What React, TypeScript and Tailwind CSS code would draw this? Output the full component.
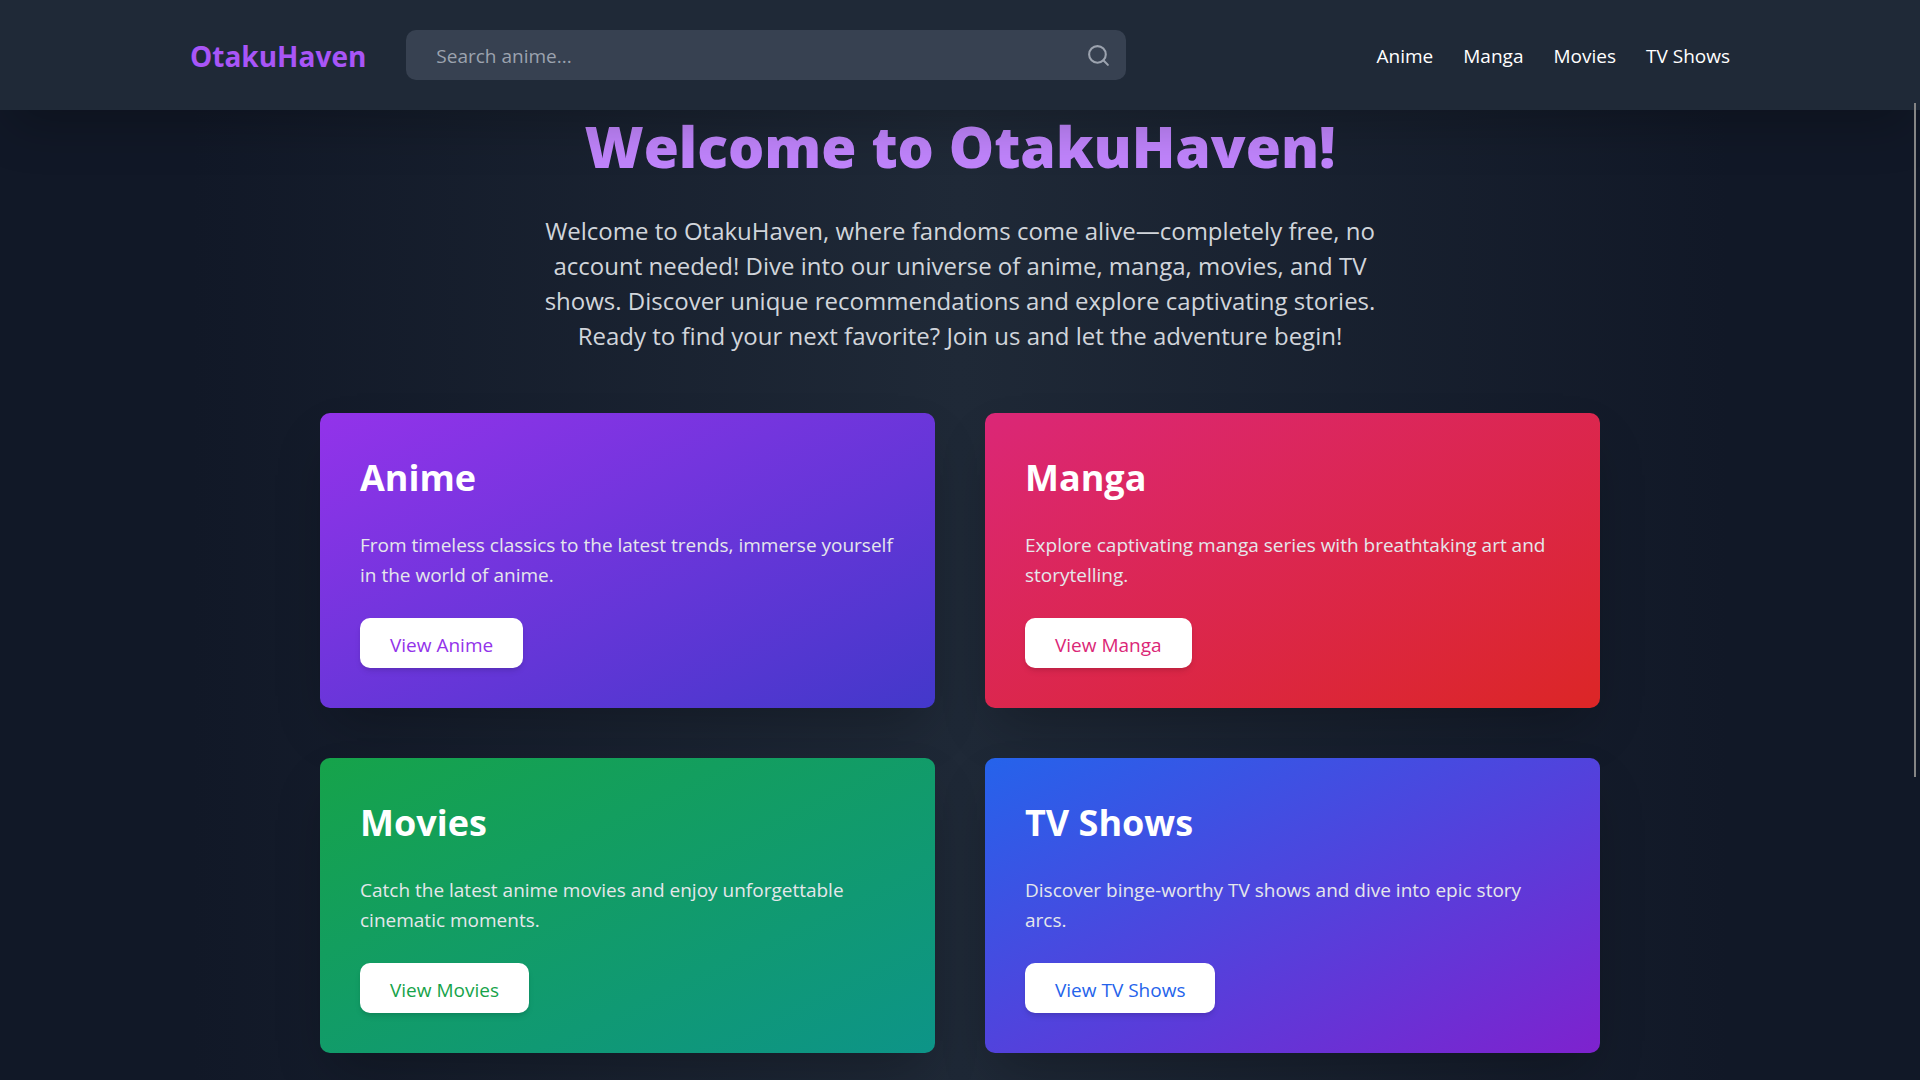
import React from "react";
import { Search } from "lucide-react";

const navLinks = ["Anime", "Manga", "Movies", "TV Shows"];

const categories = [
  {
    title: "Anime",
    text: "From timeless classics to the latest trends, immerse yourself in the world of anime.",
    card: "bg-[linear-gradient(to_bottom_right,#9333ea,#4338ca)]",
    link: "text-[#9333ea]",
  },
  {
    title: "Manga",
    text: "Explore captivating manga series with breathtaking art and storytelling.",
    card: "bg-[linear-gradient(to_bottom_right,#db2777,#dc2626)]",
    link: "text-[#db2777]",
  },
  {
    title: "Movies",
    text: "Catch the latest anime movies and enjoy unforgettable cinematic moments.",
    card: "bg-[linear-gradient(to_bottom_right,#16a34a,#0d9488)]",
    link: "text-[#16a34a]",
  },
  {
    title: "TV Shows",
    text: "Discover binge-worthy TV shows and dive into epic story arcs.",
    card: "bg-[linear-gradient(to_bottom_right,#2563eb,#7e22ce)]",
    link: "text-[#2563eb]",
  },
];

function Header() {
  return (
    <header className="sticky top-0 z-10 bg-[#1f2937] shadow-2xl">
      <div className="mx-auto flex max-w-[1540px] items-center justify-between py-[30px]">
        <div className="flex items-center gap-10">
          <a href="#" className="pt-0.5 text-[28px] leading-[38px] font-bold text-[#a855f7]">
            OtakuHaven
          </a>
          <form className="relative w-[720px]" onSubmit={(e) => e.preventDefault()}>
            <input
              type="text"
              aria-label="Search anime"
              placeholder="Search anime..."
              className="h-[50px] w-full rounded-[10px] bg-[#374151] pt-0.5 pr-14 pl-[30px] text-[19px] text-white placeholder:text-[#9ca3af]"
            />
            <button
              type="submit"
              aria-label="Search"
              className="absolute inset-y-0 right-[15px] flex items-center text-[#9ca3af]"
            >
              <Search size={25} />
            </button>
          </form>
        </div>
        <nav className="flex gap-[30px] pt-0.5 text-[19px] leading-[30px] text-white">
          {navLinks.map((label) => (
            <a key={label} href="#">
              {label}
            </a>
          ))}
        </nav>
      </div>
    </header>
  );
}

export default function App() {
  return (
    <div className="min-h-screen bg-[linear-gradient(to_right,#111827_10%,#1f2937_50%,#111827_90%)] font-['Open_Sans','Noto_Sans',sans-serif]">
      <Header />
      <main className="mx-auto max-w-[1280px] pb-[27px]">
        <section className="pt-1.5 pb-[60px] text-center">
          <h1 className="text-[57px] leading-[60px] font-extrabold text-[#c084fc]">
            Welcome to OtakuHaven!
          </h1>
          <p className="mx-auto mt-[37px] max-w-[840px] text-[24px] leading-[35px] text-[#d1d5db]">
            Welcome to OtakuHaven, where fandoms come alive—completely free, no account
            needed! Dive into our universe of anime, manga, movies, and TV shows. Discover
            unique recommendations and explore captivating stories. Ready to find your next
            favorite? Join us and let the adventure begin!
          </p>
        </section>

        <section className="grid grid-cols-2 gap-[50px]">
          {categories.map((item) => (
            <article
              key={item.title}
              className={`rounded-[10px] px-10 pt-[42px] pb-10 shadow-2xl ${item.card}`}
            >
              <h2 className="text-[36px] leading-[45px] font-bold text-white">
                {item.title}
              </h2>
              <p className="mt-[30px] mb-7 text-[19px] leading-[30px] text-[#e5e7eb]">
                {item.text}
              </p>
              <a
                href="#"
                className={`inline-block rounded-[10px] bg-white px-[30px] pt-3 pb-2 align-top text-[19px] leading-[30px] shadow-md ${item.link}`}
              >
                View {item.title}
              </a>
            </article>
          ))}
        </section>
      </main>

      {/* scroll indicator */}
      <div className="fixed top-[103px] right-1 z-20 h-[674px] w-0.5 bg-[#858585]" />
    </div>
  );
}
